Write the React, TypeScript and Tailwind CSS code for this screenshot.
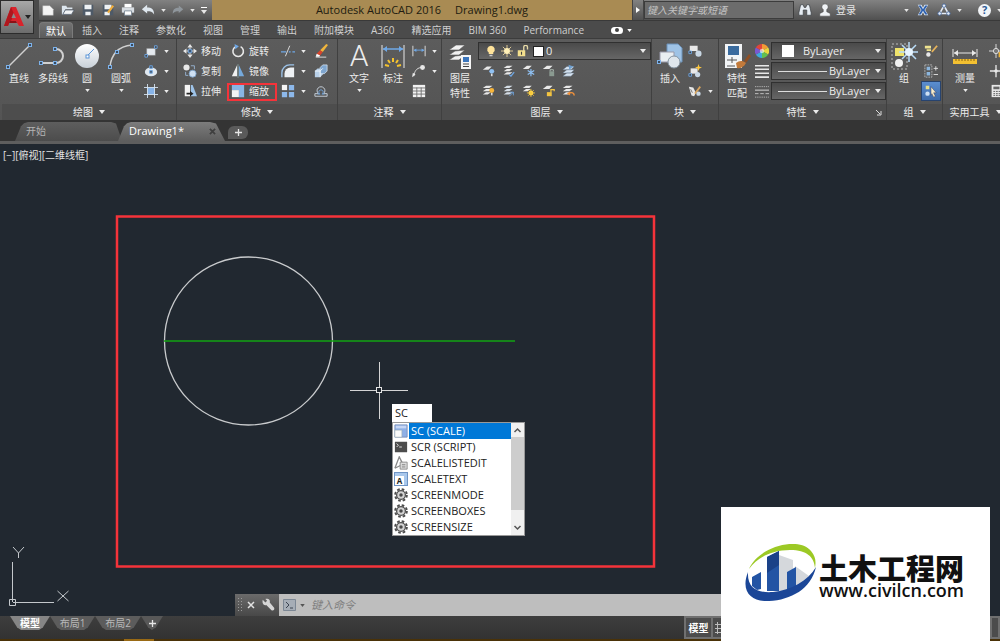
import React, { useState } from "react";

type IconName = keyof typeof glyphs;

const W = "#e8e8e8";
const B = "#6fa8e6";

// Small glyphs, all drawn on a 16x16 grid
const glyphs = {
  rect: (
    <>
      <path d="M3 13V5h10v8z" fill="#e4e9ef" stroke="#777" strokeWidth=".5" />
      <path d="M12 2h3v3h-3zM1 12h3v3H1z" fill="#444" stroke={B} />
    </>
  ),
  ellipse: (
    <>
      <ellipse cx="8" cy="9" rx="7" ry="5" fill="#dfe8f0" />
      <path d="M6.5 2h3v3h-3zM6.5 7.5h3v3h-3z" fill="#456" stroke={B} />
    </>
  ),
  hatch: (
    <>
      <path d="M4 4h8v8H4z" fill="#86b3e8" />
      <path d="M4 0v16M12 0v16M0 4h16M0 12h16" stroke="#d7e6f5" />
    </>
  ),
  move: (
    <>
      <path d="M8 0l3 4H5zM8 16l3-4H5zM0 8l4-3v6zM16 8l-4-3v6z" fill={W} />
      <path d="M6 6h4v4H6z" fill="#3c5878" stroke={B} />
      <path d="M8 4v2M8 10v2M4 8h2M10 8h2" stroke={W} />
    </>
  ),
  rotate: (
    <>
      <path d="M5 3.2A6 6 0 1 0 11 3" fill="none" stroke={W} strokeWidth="1.8" />
      <path d="M4 0l5 2.5L5 6z" fill={B} />
    </>
  ),
  trim: (
    <>
      <path d="M0 9h6M9 9h2M13 9h3" stroke={B} strokeWidth="1.5" />
      <path d="M10 2L5 14" stroke={W} />
    </>
  ),
  erase: (
    <>
      <path d="M14 0l2 1-6 8-3-2z" fill="#f0b53c" />
      <path d="M7 7l3 2-3 4-4-2z" fill="#d9442c" />
      <path d="M3 11l4 2-1 1.500H2z" fill="#fff" />
      <path d="M2 15h12" stroke={W} />
    </>
  ),
  copy: (
    <>
      <circle cx="4" cy="4" r="3.500" fill={W} />
      <circle cx="11" cy="11" r="4" fill="#cfe0f2" stroke="#7ea2c8" />
      <path d="M9 2h4v4M3 9v4h3" fill="none" stroke="#9ab8d8" />
    </>
  ),
  mirror: (
    <>
      <path d="M7 1v13H1z" fill="#f1f1f1" />
      <path d="M9 1v13h6z" fill="#75a9db" />
      <path d="M8 0v16" stroke="#9bb" strokeWidth=".6" />
    </>
  ),
  fillet: (
    <>
      <path d="M4 15V11A7 7 0 0 1 11 4h4v11z" fill="#eef1f4" />
      <path d="M1 15V10A9 9 0 0 1 10 1h5" fill="none" stroke="#9cc3ea" strokeWidth="1.5" />
    </>
  ),
  solid: (
    <>
      <path d="M1 8l3-3h6v7l-3 3H1z" fill="#b8d0e8" />
      <path d="M7 4l3-3h5v7l-3 3H7z" fill="#7fa6cf" stroke="#dce8f4" strokeWidth=".8" />
      <path d="M1 8h6v7M7 8l3-3" fill="none" stroke="#f4f8fc" />
    </>
  ),
  stretch: (
    <>
      <path d="M2 1h6v13H2z" fill="#f4f4f4" />
      <path d="M9 1h2l5 13H9z" fill="#9ec3e8" />
      <path d="M4 10h4V8l4 3-4 3v-2H4z" fill="#222" />
    </>
  ),
  scale: (
    <>
      <path d="M1 1h14v14H9V7H1z" fill="#89b4e4" />
      <path d="M1 7h8v8H1z" fill="#f4f4f4" />
    </>
  ),
  array: (
    <>
      <path d="M1 1h6v6H1z" fill="#f4f4f4" />
      <path d="M9 1h6v6H9zM1 9h6v6H1zM9 9h6v6H9z" fill="#8db8ea" />
    </>
  ),
  offset: (
    <>
      <path d="M1 14h14v-3h-4A4.500 4.500 0 1 0 5 11H1z" fill="none" stroke="#cfd8e2" />
      <path d="M4 11.500h3A2.500 2.500 0 1 1 9 11.500h3" fill="none" stroke={B} />
    </>
  ),
  dimLinear: (
    <>
      <path d="M1 2v12M15 2v12" stroke={W} />
      <path d="M2 7h12" stroke={B} />
      <path d="M2 7l3-2v4zM14 7l-3-2v4z" fill={B} />
    </>
  ),
  leader: (
    <>
      <path d="M2 14C3 8 5 5 10 4" fill="none" stroke={W} />
      <circle cx="12" cy="4" r="2.800" fill={W} />
      <path d="M0 15l1-5 3 2z" fill={W} />
    </>
  ),
  table: (
    <>
      <path d="M1 1h14v14H1z" fill="#f2f2f2" />
      <path d="M1 4.500h14M1 8h14M1 11.500h14M5.500 4v11M10.500 4v11" stroke="#6d6d6d" />
    </>
  ),
  layerOff: (
    <>
      <path d="M1 7l5-4h6l-4 4z" fill={W} />
      <circle cx="12" cy="9" r="3" fill="#8fc0f2" />
      <path d="M11 12h2v3h-2z" fill="#ddd" />
    </>
  ),
  layerIso: (
    <>
      <path d="M2 5l4-3h7l-4 3zM2 9l4-3h7l-4 3zM2 13l4-3h7l-4 3z" fill={W} />
      <path d="M9 13l2 2 4-5" fill="none" stroke={B} strokeWidth="1.500" />
    </>
  ),
  layerFreeze: (
    <>
      <path d="M1 6l5-4h6l-4 4z" fill={W} />
      <path d="M11 6v9M7 8l8 5M7 13l8-5" stroke="#8fc0f2" strokeWidth="1.500" />
    </>
  ),
  layerLock: (
    <>
      <path d="M1 6l5-4h7l-4 4z" fill={W} />
      <path d="M9 9h6v6H9z" fill="#8a9a90" />
      <path d="M10 9V7h4v2" fill="none" stroke="#b7c8bf" />
    </>
  ),
  layerMatch: (
    <>
      <path d="M1 7l5-4h9l-4 4zM1 11l5-4h9l-4 4zM1 15l5-4h9l-4 4z" fill="#d5e2ef" stroke="#5b6f85" strokeWidth=".5" />
      <path d="M8 1l6 2-5 4z" fill="#6fa0d0" />
    </>
  ),
  layerOn: (
    <>
      <path d="M1 5l4-3h8l-4 3zM1 9l4-3h8l-4 3zM1 13l4-3h6l-4 3z" fill={W} />
      <circle cx="12" cy="8" r="3" fill="#f7b53b" />
      <path d="M11 11h2v3h-2z" fill="#ddd" />
    </>
  ),
  layerUniso: (
    <>
      <path d="M2 5l4-3h7l-4 3zM2 9l4-3h7l-4 3zM2 13l4-3h7l-4 3z" fill="#d4dde6" />
      <path d="M9 15l5-5M10 10h4v4" fill="none" stroke={B} />
    </>
  ),
  layerThaw: (
    <>
      <path d="M1 5l4-3h7l-3 3zM1 9l4-3h6l-4 3z" fill={W} />
      <circle cx="11" cy="11" r="3" fill="#ffd84d" />
      <path d="M11 6v10M6 11h10M7.500 7.500l7 7M14.500 7.500l-7 7" stroke="#f7c93b" />
    </>
  ),
  layerUnlock: (
    <>
      <path d="M1 6l5-4h7l-4 4z" fill={W} />
      <path d="M6 10h6v5H6z" fill="#f3c440" />
      <path d="M11 10V7h4v2" fill="none" stroke="#f3c440" strokeWidth="1.500" />
    </>
  ),
  layerPrev: (
    <>
      <path d="M1 5l4-3h8l-4 3zM1 9l4-3h8l-4 3zM1 13l4-3h6l-3 3z" fill={W} />
      <path d="M15 14c0-3-3-4-6-3" fill="none" stroke="#f0913b" strokeWidth="1.800" />
      <path d="M6 12l4-3v5z" fill="#f0913b" />
    </>
  ),
  blockCreate: (
    <>
      <path d="M2 2h9v6H2z" fill={W} />
      <circle cx="12" cy="11" r="3.500" fill="#c9d7e4" />
      <path d="M1 8h3v3H1z" fill="#444" stroke={B} />
    </>
  ),
  blockEdit: (
    <>
      <path d="M3 5h8v6H3z" fill={W} />
      <circle cx="11" cy="12" r="3" fill="#c9d7e4" />
      <path d="M12 0l1 3 3 1-3 1-1 3-1-3-3-1 3-1z" fill="#ffc83d" />
      <path d="M1 11h3v3H1z" fill="#444" stroke={B} />
    </>
  ),
  attrEdit: (
    <>
      <path d="M1 3l5 1 3 6-2 4-3-1z" fill={W} />
      <path d="M3 6l2 4" stroke="#666" />
      <path d="M14 3L8 11" stroke="#d9a55e" strokeWidth="2" />
      <circle cx="12" cy="11" r="2.500" fill="#c9d7e4" />
    </>
  ),
  wheel: (
    <>
      <path d="M8 8V0a8 8 0 0 1 7 4z" fill="#f39a35" />
      <path d="M8 8l7-4a8 8 0 0 1 0 8z" fill="#e8d83e" />
      <path d="M8 8l7 4a8 8 0 0 1-7 4z" fill="#62c04e" />
      <path d="M8 8v8a8 8 0 0 1-7-4z" fill="#3ea9dd" />
      <path d="M8 8l-7 4a8 8 0 0 1 0-8z" fill="#7a58cf" />
      <path d="M8 8L1 4a8 8 0 0 1 7-4z" fill="#e0453c" />
      <circle cx="8" cy="8" r="2.500" fill="#fff" opacity=".6" />
    </>
  ),
  weights: <path d="M0 2h16M0 6h16M0 10.500h16M0 15h16" stroke={W} strokeWidth="1.800" />,
  dashes: (
    <>
      <path d="M0 3h16M0 15h16" stroke="#bbb" strokeDasharray="1.500 1" />
      <path d="M0 7h16" stroke={W} />
      <path d="M0 11h16" stroke="#ccc" strokeDasharray="4 2" />
    </>
  ),
  groupEdit: (
    <>
      <path d="M1 2h7v3H1zM3 6h5v2H3z" fill="#efe38f" />
      <circle cx="5" cy="12" r="2.500" fill={W} />
      <path d="M15 2L9 9" stroke="#e6b35b" strokeWidth="2" />
    </>
  ),
  ungroup: (
    <>
      <path d="M1 1h8v14H1z" fill="none" stroke="#bbb" strokeDasharray="2 1" />
      <path d="M3 3h4v4H3zM3 9h4v4H3z" fill="#8cb6dd" />
      <path d="M11 5h5M13.500 2.500v5M11 12h5" stroke={W} />
    </>
  ),
  groupSelect: (
    <>
      <path d="M2 2h4v4H2z" fill="#e8e08a" />
      <circle cx="4" cy="11" r="2.500" fill="#cde0f4" />
      <path d="M8 3l6 7h-3l2 4-2 1-2-4-1 2z" fill="#f8eecb" stroke="#335" strokeWidth=".5" />
    </>
  ),
  point: (
    <>
      <path d="M8 0v16M0 8h16" stroke={W} />
      <circle cx="8" cy="8" r="3" fill="#777" stroke={W} />
      <path d="M11 9h5v6h-5z" fill="#f0b53c" />
    </>
  ),
  cross: (
    <>
      <path d="M8 1v14M1 8h14" stroke={W} strokeWidth="1.500" />
      <circle cx="8" cy="8" r="2" fill={W} />
    </>
  ),
  calc: (
    <>
      <path d="M3 1h11v14H3z" fill={W} />
      <path d="M5 3h7v3H5z" fill="#666" />
      <path d="M5 8.500h8M5 11h8M5 13h8" stroke="#555" strokeDasharray="2 1" />
    </>
  ),
  bulb: (
    <>
      <path d="M8 1a5 5 0 0 1 3 9v2H5v-2a5 5 0 0 1 3-9z" fill="#ffe39a" />
      <path d="M6 13h4v2H6z" fill="#ccc" />
    </>
  ),
  sun: (
    <>
      <path d="M8 0v16M0 8h16M2.500 2.500l11 11M13.500 2.500l-11 11" stroke="#e9d29a" strokeWidth="1.200" />
      <circle cx="8" cy="8" r="4" fill="#fff0b8" />
    </>
  ),
  unlock: (
    <>
      <path d="M1 7h10v8H1z" fill="#f3df8d" />
      <path d="M9 8V3a2.500 2.500 0 0 1 5 0v3" fill="none" stroke="#e6d9a6" strokeWidth="1.800" />
      <path d="M6 9v4" stroke="#444" strokeWidth="1.500" />
    </>
  ),
  file: <path d="M2 3h8l4 4v7H2z" fill="#f4f4f4" stroke="#aaa" strokeWidth=".5" />,
  open: (
    <>
      <path d="M1 3h5l1 2h6v2H5l-3 6H1z" fill="#dde6ee" />
      <path d="M5 8h10l-3 5H2z" fill="#f2f4f6" stroke="#4a5868" strokeWidth=".8" />
    </>
  ),
  save: (
    <>
      <path d="M2 2h12v12H2z" fill="#4e5a68" />
      <path d="M4 2h8v5H4zM5 10h6v4H5z" fill="#eef1f4" />
    </>
  ),
  saveAs: (
    <>
      <path d="M2 2h12v12H2z" fill="#4e5a68" />
      <path d="M4 2h8v5H4zM4 10h6v4H4z" fill="#eef1f4" />
      <path d="M14 3l-6 8" stroke="#f0ad3c" strokeWidth="2.500" />
    </>
  ),
  print: (
    <>
      <path d="M4 1h8v4H4z" fill="#fff" />
      <path d="M1 5h14v6H1z" fill="#d8dde2" />
      <path d="M4 9h8v5H4z" fill="#fff" stroke="#7a8896" />
    </>
  ),
  undo: <path d="M1 7l6-5v3c5 0 8 2 8 8-2-3-4-3.500-8-3.500V12z" fill="#dfe7ee" />,
  redo: <path d="M15 7L9 2v3c-5 0-8 2-8 8 2-3 4-3.500 8-3.500V12z" fill="#8f969c" />,
  binoculars: (
    <path d="M3 2h3l1 3h2l1-3h3l2 9v3h-5V8H6v6H1v-3z" fill="#e6ecf2" stroke="#3b3f44" strokeWidth=".8" />
  ),
  user: (
    <path
      d="M8 1a3.500 3.500 0 0 1 2 6.500V10l4 2v3H2v-3l4-2V7.500A3.500 3.500 0 0 1 8 1z"
      fill="#f0f3f6"
      stroke="#444"
      strokeWidth=".6"
    />
  ),
  exchange: (
    <>
      <path d="M1 1h5l2 4 2-4h5l-4 7 4 7h-5l-2-4-2 4H1l4-7z" fill="#dbe7f5" />
      <path d="M2 2h3l3 5 3-5h3l-4 6 4 6h-3L8 9l-3 5H2l4-6z" fill="#2c5fae" />
    </>
  ),
  a360: (
    <>
      <path d="M8 3L3 12h10z" fill="none" stroke="#e4ebf5" strokeWidth="1.800" />
      <circle cx="8" cy="3" r="2" fill="#e4ebf5" stroke="#48699e" />
      <circle cx="3" cy="12" r="2" fill="#e4ebf5" stroke="#48699e" />
      <circle cx="13" cy="12" r="2" fill="#e4ebf5" stroke="#48699e" />
    </>
  ),
  wrench: (
    <path
      d="M2 2l3 3 2-2-2-2c3-1 6 1 5 4l5 6c1 2-1 4-3 3L6 8C3 9 1 6 2 2z"
      fill="#d6d6d6"
    />
  ),
  scaleCommand: (
    <>
      <path d="M1 1h14v14H1z" fill="#8fb0e6" stroke="#7a8fb8" />
      <path d="M1 7h8v8H1z" fill="#fafafa" stroke="#9aa" strokeWidth=".6" />
      <path d="M2 2h12v3H2z" fill="#c6d6f4" />
    </>
  ),
  script: (
    <>
      <path d="M1 2h14v12H1z" fill="#4c4c4c" />
      <path d="M3 4l2 2-2 2M6 8h3" fill="none" stroke="#eee" />
    </>
  ),
  scaleList: (
    <>
      <path d="M1 14L6 1l4 8M1 14l8-4" fill="none" stroke="#888" strokeWidth="1.500" />
      <path d="M7 7h8v8H7z" fill="#ddd" stroke="#888" />
      <path d="M9 10h4M9 12.500h4" stroke="#777" />
    </>
  ),
  gear: (
    <>
      <circle cx="8" cy="8" r="6.700" fill="none" stroke="#4c4c4c" strokeWidth="2.200" strokeDasharray="3 2.260" />
      <circle cx="8" cy="8" r="5" fill="#d4d4d4" stroke="#505050" strokeWidth="1.500" />
      <circle cx="8" cy="8" r="2" fill="#484848" />
    </>
  ),
};

const Icon: React.FC<{ name: IconName; className?: string }> = ({ name, className = "size-3.5" }) => (
  <svg viewBox="0 0 16 16" className={`${className} shrink-0`} aria-hidden="true">
    {glyphs[name]}
  </svg>
);

const Caret = ({ className = "" }: { className?: string }) => (
  <svg viewBox="0 0 6 4" className={`w-1.5 h-1 shrink-0 ${className}`} aria-hidden="true">
    <path d="M0 0h6L3 4z" fill="currentColor" />
  </svg>
);

const SmallCaret = () => <Caret className="w-[5px] h-[3px]" />;

const grip = (x: number, y: number) => (
  <rect x={x - 1.5} y={y - 1.5} width="3" height="3" fill="#3b4a5c" stroke="#7db2ea" />
);

// Large glyphs, drawn on a 30x30 grid
const bigGlyphs = {
  line: (
    <>
      <path d="M4 26L26 4" stroke="#d0d0d0" strokeWidth="1.500" />
      {grip(4, 26)}
      {grip(26, 4)}
    </>
  ),
  polyline: (
    <>
      <path d="M3 22H18a7 7 0 0 0 0-14" fill="none" stroke="#d0d0d0" strokeWidth="2" />
      {grip(3, 22)}
      {grip(17, 22)}
      {grip(17, 8)}
    </>
  ),
  circle: (
    <>
      <defs>
        <linearGradient id="disc" x1="0" y1="0" x2="0" y2="1">
          <stop offset="0" stopColor="#ffffff" />
          <stop offset="1" stopColor="#c8d0d8" />
        </linearGradient>
      </defs>
      <circle cx="15" cy="15" r="12" fill="url(#disc)" />
      <path d="M15 15l7-7" stroke="#5b95d8" />
      <rect x="14" y="14" width="3" height="3" fill="#fff" stroke="#5b95d8" />
    </>
  ),
  arc: (
    <>
      <path d="M4 26C5 14 12 5 26 4" fill="none" stroke="#d0d0d0" strokeWidth="1.500" />
      {grip(4, 26)}
      {grip(11, 11)}
      {grip(26, 4)}
    </>
  ),
  dimension: (
    <>
      <path d="M4 4v23M26 4v23" stroke={W} />
      <path d="M5 8h20" stroke={B} strokeWidth="1.500" />
      <path d="M5 8l4-3v6zM25 8l-4-3v6z" fill={B} />
      <path d="M15 17v4M10 19l2 3M20 19l-2 3M7 24l4 1M23 24l-4 1" stroke="#f5c32e" strokeWidth="2" />
    </>
  ),
  layers: (
    <>
      <path d="M4 9l7-5h9l-6 5zM4 14l6-4 10-1-6 5zM4 19l6-4 10-1-6 5z" fill="#f2f2f2" stroke="#555" strokeWidth=".6" />
      <path d="M16 14h10v14H16z" fill="#f6f6f6" />
      <path d="M18 16h6v5h-6z" fill="#3b76bd" />
      <path d="M18 23h6M18 25.500h6" stroke="#444" />
    </>
  ),
  insert: (
    <>
      <path d="M12 3h11l4 4v14H12z" fill="#9fc3e6" stroke="#6c93bb" />
      <path d="M5 11h14v10H5z" fill="#e9eef2" stroke="#99a" />
      <circle cx="19" cy="21" r="6" fill="#dfe6ec" stroke="#8493a0" />
      {grip(4, 21)}
    </>
  ),
  match: (
    <>
      <path d="M3 3h17v24H3z" fill="#f2f4f6" />
      <path d="M6 5h11v9H6z" fill="#3a6b9e" />
      <path d="M5 19h10M10 16v6M5 25h8" stroke="#555" />
      <path d="M27 13l-5 7 2 2 5-7z" fill="#8f4f24" />
      <path d="M14 22c3-2 6-3 10 0-2 4-6 6-9 5z" fill="#c27a3b" />
    </>
  ),
  group: (
    <>
      <path d="M3 3h15v25H3z" fill="none" stroke="#bbb" strokeDasharray="2 2" />
      <path d="M6 7h9v8H6z" fill="#efe36c" />
      <circle cx="10" cy="22" r="4" fill="#f2f2f2" />
      <path d="M20 1v20M10 11h19M13 4l14 14M27 4L13 18" stroke="#b9dcf7" strokeWidth="1.500" />
      <circle cx="20" cy="11" r="4" fill="#e8f5ff" />
    </>
  ),
  measure: (
    <>
      <path d="M3 8v8M27 8v8M4 12h22" stroke={W} />
      <path d="M4 12l4-3v6zM26 12l-4-3v6z" fill={W} />
      <path d="M3 18h24v5H3z" fill="#f3c031" />
      <path d="M6 18v2M9 18v2M12 18v2M15 18v2M18 18v2M21 18v2M24 18v2" stroke="#8a6510" />
    </>
  ),
};

interface BigButtonProps {
  label: string;
  glyph?: keyof typeof bigGlyphs;
  width?: string;
  caret?: boolean;
}

const BigButton: React.FC<BigButtonProps> = ({ label, glyph, width = "w-9", caret }) => (
  <button className={`${width} flex shrink-0 flex-col items-center self-start text-[10px] leading-[15px]`}>
    {glyph ? (
      <svg viewBox="0 0 30 30" className="size-[30px]" aria-hidden="true">
        {bigGlyphs[glyph]}
      </svg>
    ) : (
      <span className="h-[30px] font-['Roboto'] text-[30px] leading-[30px] font-light">A</span>
    )}
    <span className="whitespace-pre">{label}</span>
    {caret && (
      <span className="flex h-2 items-center">
        <SmallCaret />
      </span>
    )}
  </button>
);

// Column of small icon buttons, some with a drop-down arrow
const ToolColumn = ({ tools, carets = [] }: { tools: IconName[]; carets?: number[] }) => (
  <div className="grid shrink-0 auto-rows-[20px] content-start">
    {tools.map((t, i) => (
      <button key={t} aria-label={t} className="flex items-center gap-1.5">
        <Icon name={t} />
        {carets.includes(i) && <SmallCaret />}
      </button>
    ))}
  </div>
);

interface PanelProps {
  title: string;
  className: string;
  launcher?: boolean;
  children: React.ReactNode;
}

const Panel: React.FC<PanelProps> = ({ title, className, launcher, children }) => (
  <section className={`${className} flex flex-col border-r border-[#404040]`}>
    <div className="flex h-[65px] pt-0.5">{children}</div>
    <button className="relative flex h-4 w-full items-center justify-center gap-1.5 bg-[#4d4d4d] text-[10px] whitespace-nowrap">
      {title}
      <Caret />
      {launcher && (
        <svg viewBox="0 0 6 6" className="absolute right-1 bottom-1 size-1.5" aria-hidden="true">
          <path d="M0 0l4 4M5 1v4H1" fill="none" stroke="#ddd" />
        </svg>
      )}
    </button>
  </section>
);

const modifyTools: { name: IconName; label: string; active?: boolean }[] = [
  { name: "move", label: "移动" },
  { name: "rotate", label: "旋转" },
  { name: "copy", label: "复制" },
  { name: "mirror", label: "镜像" },
  { name: "stretch", label: "拉伸" },
  { name: "scale", label: "缩放", active: true },
];

const layerTools: IconName[] = [
  "layerOff",
  "layerIso",
  "layerFreeze",
  "layerLock",
  "layerMatch",
  "layerOn",
  "layerUniso",
  "layerThaw",
  "layerUnlock",
  "layerPrev",
];

interface ComboProps {
  label: string;
  value: string;
  padding: string;
  children?: React.ReactNode;
}

const Combo: React.FC<ComboProps> = ({ label, value, padding, children }) => (
  <div className="relative h-[18px] border border-[#303030] bg-linear-to-b from-[#4a4a4a] to-[#666]">
    <select aria-label={label} className={`${padding} block h-4 w-full appearance-none text-[11px] leading-4 outline-none`}>
      <option>{value}</option>
    </select>
    <div className="pointer-events-none absolute inset-y-0 left-1.5 flex items-center gap-1">{children}</div>
    <Caret className="pointer-events-none absolute top-1.5 right-1" />
  </div>
);

const Ribbon = () => (
  <div className="flex h-[82px] shrink-0 border-t border-[#3c3c3c] bg-linear-to-b from-[#5c5c5c] to-[#545454] text-[#ececec]">
    <Panel title="绘图" className="w-[177px] shrink-0 pl-0.5">
      <BigButton label="直线" glyph="line" width="w-[34px]" />
      <BigButton label="多段线" glyph="polyline" width="w-[34px]" />
      <BigButton label="圆" glyph="circle" width="w-[34px]" caret />
      <BigButton label="圆弧" glyph="arc" width="w-[34px]" caret />
      <div className="pl-1.5">
        <ToolColumn tools={["rect", "ellipse", "hatch"]} carets={[0, 1, 2]} />
      </div>
    </Panel>
    <Panel title="修改" className="w-[161px] shrink-0">
      <div className="grid auto-rows-[20px] grid-cols-[48px_50px] content-start pl-1.5">
        {modifyTools.map((t) => (
          <button key={t.name} className="relative flex items-center gap-1 text-[10px]">
            <Icon name={t.name} />
            {t.label}
            {t.active && <span className="absolute top-0.5 right-1 bottom-0 -left-1 border-2 border-[#f5333a]" />}
          </button>
        ))}
      </div>
      <ToolColumn tools={["trim", "fillet", "array"]} carets={[0, 1, 2]} />
      <div className="pl-2">
        <ToolColumn tools={["erase", "solid", "offset"]} />
      </div>
    </Panel>
    <Panel title="注释" className="w-[104px] shrink-0">
      <div className="flex pl-1">
        <BigButton label="文字" width="w-[34px]" caret />
        <BigButton label="标注" glyph="dimension" width="w-[34px]" />
        <div className="pl-0.5">
          <ToolColumn tools={["dimLinear", "leader", "table"]} carets={[0, 1]} />
        </div>
      </div>
    </Panel>
    <Panel title="图层" className="w-[210px] shrink-0">
      <BigButton label={"图层\n特性"} glyph="layers" />
      <div className="flex-1 pt-px">
        <Combo label="图层" value="0" padding="pl-[67px]">
          <Icon name="bulb" className="size-3" />
          <Icon name="sun" className="size-3" />
          <Icon name="unlock" className="size-3" />
          <span className="size-[11px] border border-[#222] bg-white" />
        </Combo>
        <div className="grid auto-rows-[20px] grid-cols-[20px_20px_20px_20px_20px] pl-1">
          {layerTools.map((t) => (
            <button key={t} aria-label={t}>
              <Icon name={t} className="size-[13px]" />
            </button>
          ))}
        </div>
      </div>
    </Panel>
    <Panel title="块" className="w-[67px] shrink-0">
      <BigButton label="插入" glyph="insert" />
      <ToolColumn tools={["blockCreate", "blockEdit", "attrEdit"]} carets={[2]} />
    </Panel>
    <Panel title="特性" className="w-[168px] shrink-0" launcher>
      <BigButton label={"特性\n匹配"} glyph="match" />
      <ToolColumn tools={["wheel", "weights", "dashes"]} />
      <div className="grid flex-1 content-start gap-0.5 pt-px pl-0.5">
        <Combo label="颜色" value="ByLayer" padding="pl-[31px]">
          <span className="ml-1 size-3 bg-white" />
        </Combo>
        <Combo label="线宽" value="ByLayer" padding="pl-[57px]">
          <span className="h-px w-[49px] bg-[#ddd]" />
        </Combo>
        <Combo label="线型" value="ByLayer" padding="pl-[57px]">
          <span className="h-px w-[49px] bg-[#ddd]" />
        </Combo>
      </div>
    </Panel>
    <Panel title="组" className="w-14 shrink-0">
      <BigButton label="组" glyph="group" width="w-[34px]" />
      <div className="grid auto-rows-[20px] content-start">
        <button aria-label="编辑组" className="flex items-center justify-center">
          <Icon name="groupEdit" />
        </button>
        <button aria-label="解除编组" className="flex items-center justify-center">
          <Icon name="ungroup" />
        </button>
        <button
          aria-label="启用组选择"
          className="flex w-5 items-center justify-center border border-[#27436e] bg-linear-to-b from-[#5b8ed0] to-[#3d6aa8]"
        >
          <Icon name="groupSelect" />
        </button>
      </div>
    </Panel>
    <Panel title="实用工具" className="min-w-[66px] flex-1">
      <BigButton label="测量" glyph="measure" width="w-[44px]" caret />
      <div className="pl-0.5">
        <ToolColumn tools={["point", "cross", "calc"]} />
      </div>
    </Panel>
  </div>
);

const ribbonTabs = ["插入", "注释", "参数化", "视图", "管理", "输出", "附加模块", "A360", "精选应用", "BIM 360", "Performance"];

const quickAccess: IconName[] = ["file", "open", "save", "saveAs", "print", "undo"];

const Header = () => (
  <header className="flex h-[38px] shrink-0 bg-[#4b4b4b] text-[#e6e6e6]">
    <button
      aria-label="应用程序菜单"
      className="mr-[5px] flex h-[34px] w-[34px] shrink-0 items-center border border-[#2c2c2c] bg-linear-to-b from-[#a8a8a8] to-[#6c6c6c] pl-0.5"
    >
      <svg viewBox="0 0 22 24" className="h-6 w-[22px]" aria-hidden="true">
        <path d="M8 2h5l8 19h-5l-3-5H7l-2 5H1z" fill="#d9232b" />
        <path d="M1 21L8 2l3 7-3 7H7l-2 5z" fill="#b0161d" />
        <path d="M10.500 8l2.500 5H8.500z" fill="#8b8b8b" />
        <path d="M7 16h6l1 2H6z" fill="#8d1016" />
      </svg>
      <Caret className="text-[#222]" />
    </button>
    <div className="flex min-w-0 flex-1 flex-col">
      <div className="flex h-5 bg-linear-to-b from-[#828282] to-[#505050]">
        <div className="flex w-[173px] shrink-0 items-center gap-1.5 pl-0.5">
          {quickAccess.map((t) => (
            <button key={t} aria-label={t}>
              <Icon name={t} />
            </button>
          ))}
          <SmallCaret />
          <button aria-label="redo">
            <Icon name="redo" className="size-3" />
          </button>
          <SmallCaret />
          <button aria-label="自定义" className="border-t border-white pt-0.5">
            <Caret />
          </button>
        </div>
        <h1 className="flex flex-1 items-center justify-center gap-3.5 bg-[#a98b53] text-[11px] whitespace-nowrap text-[#211b10]">
          <span>Autodesk AutoCAD 2016</span>
          <span>Drawing1.dwg</span>
        </h1>
        <button aria-label="展开" className="flex w-3 items-center justify-center border-x border-[#444]">
          <svg viewBox="0 0 4 6" className="h-1.5 w-1">
            <path d="M0 0l4 3-4 3z" fill="#fff" />
          </svg>
        </button>
        <input
          aria-label="搜索"
          placeholder="键入关键字或短语"
          className="my-px w-[150px] shrink-0 border border-[#3c3c3c] bg-[#6c6c6c] px-0.5 text-[10px] italic outline-none placeholder:text-[#c4c4c4]"
        />
        <div className="flex w-[206px] shrink-0 items-center overflow-hidden pl-1">
          <button aria-label="搜索" className="mr-1.5">
            <Icon name="binoculars" />
          </button>
          <button className="flex shrink-0 items-center gap-1 text-[10px] whitespace-nowrap">
            <Icon name="user" />
            登录
          </button>
          <span className="ml-12 flex items-center gap-2">
            <SmallCaret />
            <button aria-label="Exchange">
              <Icon name="exchange" className="size-3" />
            </button>
            <button aria-label="A360" className="flex items-center gap-1.5">
              <Icon name="a360" />
              <SmallCaret />
            </button>
          </span>
          <span className="mx-2 h-3 w-px bg-[#8b8b8b]" />
          <button aria-label="帮助" className="flex items-center gap-1.5">
            <span className="flex size-[13px] items-center justify-center rounded-full bg-[#f2f5f8] text-[11px] leading-3 font-bold text-[#2b5a96]">
              ?
            </span>
            <SmallCaret />
          </button>
        </div>
      </div>
      <nav className="flex h-[18px] items-end gap-px border-t border-[#393939] text-[10px] leading-4 whitespace-nowrap text-[#cfcfcf]">
        <button className="h-4 rounded-t-sm border border-b-0 border-[#7b7b7b] bg-linear-to-b from-[#727272] to-[#5c5c5c] px-1.5 leading-[14px] text-white">
          默认
        </button>
        {ribbonTabs.map((t) => (
          <button key={t} className="h-4 px-2">
            {t}
          </button>
        ))}
        <button aria-label="最小化功能区" className="flex h-4 items-center gap-1 pl-[18px] text-white">
          <span className="flex h-[7px] w-3 items-center justify-center rounded-sm bg-white">
            <span className="size-1 rounded-full bg-[#444]" />
          </span>
          <SmallCaret />
        </button>
      </nav>
    </div>
  </header>
);

const FileTabs = () => (
  <div className="flex h-6 shrink-0 items-end border-b-3 border-[#5e5e5e] bg-[#343434] pl-[15px] text-[11px]">
    <button className="h-[19px] w-[107px] bg-linear-to-b from-[#5e5e5e] to-[#4c4c4c] pl-[11px] text-left text-[10px] text-[#b4b4b4] [clip-path:polygon(0_100%,6px_22%,9px_6%,13px_0,96px_0,101px_8%,107px_100%)]">
      开始
    </button>
    <div className="-ml-1 flex h-[19px] w-[108px] items-center bg-linear-to-b from-[#7c7c7c] to-[#5e5e5e] pl-[11px] text-white [clip-path:polygon(0_100%,6px_22%,9px_6%,13px_0,92px_0,98px_8%,107px_100%)]">
      <button>Drawing1*</button>
      <button aria-label="关闭" className="mr-2.5 ml-auto">
        <svg viewBox="0 0 8 8" className="size-[7px]">
          <path d="M1 1l6 6M7 1L1 7" stroke="#3f3f3f" strokeWidth="2" />
        </svg>
      </button>
    </div>
    <button
      aria-label="新图形"
      className="mb-0.5 ml-0.5 flex h-[13px] w-5 items-center justify-center rounded-t-md rounded-br-md bg-[#5a5a5a]"
    >
      <svg viewBox="0 0 8 8" className="size-[7px]">
        <path d="M4 0v8M0 4h8" stroke="#e6e6e6" strokeWidth="1.500" />
      </svg>
    </button>
  </div>
);

const suggestions: { name: IconName | "scaleText"; label: string }[] = [
  { name: "scaleCommand", label: "SC (SCALE)" },
  { name: "script", label: "SCR (SCRIPT)" },
  { name: "scaleList", label: "SCALELISTEDIT" },
  { name: "scaleText", label: "SCALETEXT" },
  { name: "gear", label: "SCREENMODE" },
  { name: "gear", label: "SCREENBOXES" },
  { name: "gear", label: "SCREENSIZE" },
];

const CommandPopup = () => {
  const [command, setCommand] = useState("SC");
  const [selected, setSelected] = useState(0);

  return (
    <div className="absolute top-[260px] left-[392px] w-[133px] text-[11px] text-[#222]">
      <input
        aria-label="命令"
        value={command}
        onChange={(e) => setCommand(e.target.value)}
        className="block h-[18px] w-10 bg-white px-[3px] pb-0.5 text-[11px] outline-none"
      />
      <div className="flex border border-[#999] bg-white">
        <ul className="flex-1">
          {suggestions.map((s, i) => (
            <li key={s.label}>
              <button onClick={() => setSelected(i)} className="flex h-4 w-full items-center pl-px">
                {s.name === "scaleText" ? (
                  <span className="flex size-3.5 items-end border border-[#6d93c4] bg-[#a9c8ec]">
                    <span className="size-[9px] bg-white text-[8px] leading-[9px] font-bold">A</span>
                  </span>
                ) : (
                  <Icon name={s.name} />
                )}
                <span
                  className={`ml-px flex-1 pl-0.5 text-left leading-4 ${i === selected ? "bg-[#0078d7] text-white" : ""}`}
                >
                  {s.label}
                </span>
              </button>
            </li>
          ))}
        </ul>
        <div className="flex w-[13px] flex-col items-center bg-[#f0f0f0]">
          <svg viewBox="0 0 13 14" className="h-3.5 w-full">
            <path d="M3.500 9l3-3 3 3" fill="none" stroke="#555" strokeWidth="1.500" />
          </svg>
          <span className="h-[73px] w-full bg-[#cdcdcd]" />
          <svg viewBox="0 0 13 14" className="mt-auto h-3.5 w-full">
            <path d="M3.500 5l3 3 3-3" fill="none" stroke="#555" strokeWidth="1.500" />
          </svg>
        </div>
      </div>
    </div>
  );
};

const CommandLine = () => (
  <div className="absolute right-4 bottom-0 left-[235px] flex h-[22px]">
    <div className="flex w-11 items-center gap-1 bg-linear-to-b from-[#6b6b6b] to-[#484848] pl-0.5">
      <span className="h-4 w-1.5 bg-[radial-gradient(#9a9a9a_1px,transparent_1px)] bg-size-[3px_3px]" />
      <button aria-label="关闭">
        <svg viewBox="0 0 8 8" className="size-2">
          <path d="M1 1l6 6M7 1L1 7" stroke="#e2e2e2" strokeWidth="1.500" />
        </svg>
      </button>
      <button aria-label="自定义" className="pl-0.5">
        <Icon name="wrench" className="size-3.5" />
      </button>
    </div>
    <label className="flex flex-1 items-center gap-1 bg-[#bebebe] pl-1 text-[#555]">
      <svg viewBox="0 0 13 12" className="h-3 w-[13px]" aria-hidden="true">
        <path d="M.5.5h12v11H.5z" fill="#a6adb6" stroke="#7c8794" />
        <path d="M3 3l3 3-3 3M7 9h3" fill="none" stroke="#3c4450" />
      </svg>
      <SmallCaret />
      <input
        aria-label="键入命令"
        placeholder="键入命令"
        className="ml-0.5 flex-1 text-[11px] italic outline-none placeholder:text-[#808080]"
      />
    </label>
  </div>
);

const DrawingArea = () => (
  <main className="relative min-h-0 flex-1 overflow-hidden bg-[#212830]">
    <p className="pt-[3px] pl-[3px] text-[10px] leading-4 text-[#e4e4e4]">[−][俯视][二维线框]</p>
    <svg className="absolute inset-0 size-full" aria-hidden="true">
      <circle cx="248.500" cy="197" r="84" fill="none" stroke="#c9cbcd" strokeWidth="1.300" />
      <path d="M164 197H515" stroke="#12a312" strokeWidth="1.300" />
      <rect x="117" y="72.500" width="537" height="350" fill="none" stroke="#f5333a" strokeWidth="2.500" />
      <path d="M350 246.500h26M382 246.500h26M379.500 218v26M379.500 249v26" stroke="#d4d4d4" />
      <rect x="376.500" y="243.500" width="5" height="5" fill="none" stroke="#e4e4e4" />
      <path d="M12.500 418v40M13 458.500h41M9.500 455.500h6v6h-6z" fill="none" stroke="#c4c8cc" />
      <path d="M13 403l5.500 6 5.500-6M18.500 409v5M57.500 447l11 10M68.500 447l-11 10" fill="none" stroke="#c4c8cc" />
    </svg>
    <CommandPopup />
    <CommandLine />
  </main>
);

const layoutTab = "h-[14px] [clip-path:polygon(0_0,100%_0,calc(100%-7px)_80%,calc(100%-11px)_100%,11px_100%,7px_80%)]";

const StatusBar = () => (
  <footer className="flex h-[25px] shrink-0 flex-col">
    <div className="flex h-[23px] items-start bg-linear-to-b from-[#3e3e3e] to-[#323232] pl-2.5 text-[10px] leading-[14px] text-[#b8b8b8]">
      <button className={`${layoutTab} w-10 bg-[#858585] font-bold text-white`}>模型</button>
      <button className={`${layoutTab} w-[45px] bg-[#5c5c5c]`}>布局1</button>
      <button className={`${layoutTab} w-[46px] bg-[#5c5c5c]`}>布局2</button>
      <button aria-label="新建布局" className={`${layoutTab} flex w-[22px] items-center justify-center bg-[#585858]`}>
        <svg viewBox="0 0 8 8" className="size-[7px]">
          <path d="M4 0v8M0 4h8" stroke="#e6e6e6" strokeWidth="1.500" />
        </svg>
      </button>
      <div className="ml-auto flex h-[23px] w-[316px] gap-0.5 bg-[#707070] p-0.5 text-white">
        <button className="w-[25px] bg-[#4c4c4c] font-bold">模型</button>
        <button aria-label="栅格" className="flex flex-1 items-center bg-[#4c4c4c] pl-0.5">
          <svg viewBox="0 0 12 12" className="size-3">
            <path d="M2.500 0v12M6.500 0v12M10.500 0v12M0 2.500h12M0 6.500h12M0 10.500h12" stroke="#bdbdbd" />
          </svg>
        </button>
        <button aria-label="自定义" className="w-1.5 bg-[#4c4c4c]" />
      </div>
    </div>
    <div className="h-0.5 bg-[#4a3208] pl-[124px]">
      <div className="h-full w-[30px] bg-[#9a6a14]" />
    </div>
  </footer>
);

// Site badge over the lower right corner
const SiteBadge = () => (
  <aside className="absolute right-2.5 bottom-0 flex h-[134px] w-[269px] items-center gap-0.5 bg-white pl-6 whitespace-nowrap text-[#111]">
    <svg viewBox="0 0 72 60" className="h-[60px] w-[72px] shrink-0" aria-hidden="true">
      <path d="M34 11l14 5v31H34zM50 22l14 10-12 14h-4z" fill="#d5d8dc" />
      <path d="M7 33l9-5v17l-4 1-5-4zM22 13l12-6v40H22zM42 28l9-5v20l-9 3z" fill="#2354a4" />
      <path d="M22 13l12-6v14l-12 8z" fill="#1a4188" />
      <path d="M4 25C14 2 54-8 66 7c5 6 5 11 4 17-1-11-8-18-25-18C26 6 12 14 4 25z" fill="#9cc925" />
      <path d="M3 28C-5 48 7 58 24 57c22-1 42-12 47-34-8 14-25 23-43 25C13 49 2 45 3 28z" fill="#1b4697" />
    </svg>
    <div className="mt-1.5">
      <p className="text-[29px] leading-[26px] font-black">土木工程网</p>
      <p className="text-[18px] leading-4 font-semibold">www.civilcn.com</p>
    </div>
  </aside>
);

export default function App() {
  return (
    <div className="relative flex h-screen flex-col overflow-hidden bg-[#212830] font-['Open_Sans','Noto_Sans_CJK_SC',sans-serif]">
      <Header />
      <Ribbon />
      <FileTabs />
      <DrawingArea />
      <StatusBar />
      <SiteBadge />
    </div>
  );
}
